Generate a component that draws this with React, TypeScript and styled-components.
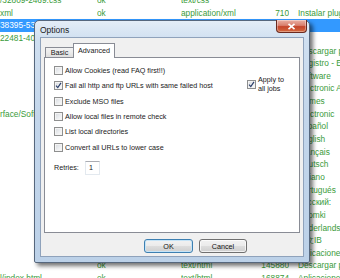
import React from "react";
import styled, { createGlobalStyle } from "styled-components";

const Global = createGlobalStyle`
  html, body { margin: 0; padding: 0; background: #ffffff; }
  body { width: 340px; height: 278px; overflow: hidden; }
`;

const Page = styled.div`
  position: relative;
  width: 340px;
  height: 278px;
  overflow: hidden;
  background: #ffffff;
  font-family: "Liberation Sans", Arial, sans-serif;
`;

const List = styled.div`
  display: flex;
  flex-direction: column;
  margin-top: -6px;
`;

const Row = styled.div<{ $selected?: boolean }>`
  display: grid;
  grid-template-columns: 97px 84px 80px 28px 9px 1fr;
  height: 12.65px;
  align-items: center;
  background: ${(p) => (p.$selected ? "#3399ff" : "transparent")};
  color: ${(p) => (p.$selected ? "#ffffff" : "#3a9b3a")};
  font-size: 8.3px;
  line-height: 12.65px;
  white-space: nowrap;
`;

const Cell = styled.span<{ $right?: boolean }>`
  overflow: hidden;
  text-align: ${(p) => (p.$right ? "right" : "left")};
`;

type RowData = {
  path?: string;
  status?: string;
  type?: string;
  size?: string;
  desc?: string;
  selected?: boolean;
};

const rows: RowData[] = [
  { path: "/32809-2469.css", status: "ok", type: "text/css" },
  { path: "xml", status: "ok", type: "application/xml", size: "710", desc: "Instalar plugins" },
  { path: "38395-535", selected: true },
  { path: "22481-408" },
  { desc: "Descargar plugins" },
  { desc: "Registro - Editar" },
  { desc: "Software" },
  { desc: "Electronic Ante" },
  { desc: "Games" },
  { path: "rface/Soft", desc: "Electronic" },
  { desc: "Español" },
  { desc: "English" },
  { desc: "Français" },
  { desc: "Deutsch" },
  { desc: "Italiano" },
  { desc: "Portugués" },
  { desc: "Pусский:" },
  { desc: "Suomki" },
  { desc: "Nederlands" },
  { desc: "中文IB" },
  { desc: "Aplicaciones" },
  { status: "ok", type: "text/html", size: "145880", desc: "Descargar plugins" },
  { path: "l/index.html", status: "ok", type: "text/html", size: "168874", desc: "Aplicaciones" },
];

const Dialog = styled.div`
  position: absolute;
  left: 34px;
  top: 20px;
  width: 276px;
  height: 243px;
  box-sizing: border-box;
  border: 1px solid #56677d;
  border-radius: 5px 5px 2px 2px;
  background: linear-gradient(180deg, #e4edf7 0%, #cfdff0 8%, #c3d6eb 40%, #bcd1e8 100%);
  box-shadow: 3px 3px 4px rgba(0, 0, 0, 0.55);
  display: flex;
  flex-direction: column;
  padding: 0 5px 5px 5px;
`;

const TitleBar = styled.div`
  height: 16px;
  display: flex;
  align-items: center;
  font-size: 8.5px;
  color: #1b1b1b;
`;

const Title = styled.span`
  padding-top: 1px;
`;

const CloseButton = styled.div`
  margin-left: auto;
  margin-right: -3px;
  align-self: flex-start;
  margin-top: -1px;
  width: 31px;
  height: 13px;
  box-sizing: border-box;
  border: 1px solid #6a2a20;
  border-top: none;
  border-radius: 0 0 4px 4px;
  background: linear-gradient(180deg, #eab1a5 0%, #d9806e 45%, #c6452b 55%, #d46a3f 100%);
  display: flex;
  align-items: center;
  justify-content: center;
  box-shadow: inset 0 0 0 1px rgba(255, 255, 255, 0.35);
`;

const Client = styled.div`
  flex: 1;
  background: #f0f0f0;
  border: 1px solid #8fa2bb;
  display: flex;
  flex-direction: column;
  font-size: 7.2px;
  color: #1a1a1a;
`;

const TabStrip = styled.div`
  display: flex;
  align-items: flex-end;
  height: 15px;
  margin: 5px 0 -1px 4px;
  position: relative;
  z-index: 1;
`;

const Tab = styled.div<{ $active?: boolean }>`
  box-sizing: border-box;
  height: ${(p) => (p.$active ? "15px" : "11px")};
  width: ${(p) => (p.$active ? "42px" : "28px")};
  border: 1px solid #898c95;
  border-bottom: ${(p) => (p.$active ? "none" : "1px solid #898c95")};
  border-right: ${(p) => (p.$active ? "1px solid #898c95" : "none")};
  background: ${(p) =>
    p.$active ? "#ffffff" : "linear-gradient(180deg, #f3f3f3 0%, #ebebeb 50%, #dedede 100%)"};
  display: flex;
  align-items: center;
  justify-content: center;
  padding-bottom: ${(p) => (p.$active ? "1px" : "0")};
`;

const Panel = styled.div`
  margin: 0 3px;
  height: 176px;
  box-sizing: border-box;
  border: 1px solid #898c95;
  background: #ffffff;
  display: flex;
  padding: 5px 0 0 9px;
`;

const OptionsColumn = styled.div`
  display: flex;
  flex-direction: column;
`;

const OptionRow = styled.label`
  display: flex;
  align-items: center;
  gap: 2px;
  height: 15.3px;
  white-space: nowrap;
`;

const Box = styled.span`
  width: 9px;
  height: 9px;
  box-sizing: border-box;
  border: 1px solid #8e8f8f;
  background: linear-gradient(135deg, #d6d9de 0%, #eef0f2 60%, #fbfbfb 100%);
  box-shadow: inset 0 0 0 1px #f4f4f4;
  display: flex;
  align-items: center;
  justify-content: center;
  flex-shrink: 0;
`;

const RetriesRow = styled.div`
  display: flex;
  align-items: center;
  margin-top: 6px;
  height: 14px;
`;

const RetriesLabel = styled.span`
  width: 31px;
`;

const NumberInput = styled.div`
  width: 15px;
  height: 14px;
  box-sizing: border-box;
  border: 1px solid #e3e9ef;
  border-top-color: #abadb3;
  background: #ffffff;
  padding-left: 3px;
  display: flex;
  align-items: center;
`;

const SideColumn = styled.div`
  margin-left: auto;
  width: 52px;
  padding-top: 13px;
`;

const SideOption = styled.label`
  display: flex;
  align-items: center;
  gap: 2px;
  line-height: 8.5px;
`;

const ButtonRow = styled.div`
  display: flex;
  justify-content: flex-end;
  gap: 6px;
  padding-right: 56px;
  margin-top: 6px;
`;

const Button = styled.div<{ $default?: boolean; $w: number }>`
  width: ${(p) => p.$w}px;
  height: 14px;
  box-sizing: border-box;
  border: 1px solid ${(p) => (p.$default ? "#3c7fb1" : "#707070")};
  border-radius: 3px;
  background: linear-gradient(180deg, #f2f2f2 0%, #ebebeb 48%, #dddddd 52%, #cfcfcf 100%);
  box-shadow: inset 0 0 0 1px ${(p) => (p.$default ? "#c6e4f7" : "rgba(255,255,255,0.7)")};
  display: flex;
  align-items: center;
  justify-content: center;
  color: #111;
`;

const Check = () => (
  <svg width="7" height="7" viewBox="0 0 7 7">
    <path d="M1 3.6 L2.8 5.6 L6 0.9" fill="none" stroke="#2b3f6b" strokeWidth="1.2" />
  </svg>
);

const Checkbox = ({ checked }: { checked?: boolean }) => <Box>{checked ? <Check /> : null}</Box>;

const options = [
  { label: "Allow Cookies (read FAQ first!!)" },
  { label: "Fail all http and ftp URLs with same failed host", checked: true },
  { label: "Exclude MSO files" },
  { label: "Allow local files in remote check" },
  { label: "List local directories" },
  { label: "Convert all URLs to lower case" },
];

export default function App() {
  return (
    <Page>
      <Global />
      <List>
        {rows.map((r, i) => (
          <Row key={i} $selected={r.selected}>
            <Cell>{r.path ?? ""}</Cell>
            <Cell>{r.status ?? ""}</Cell>
            <Cell>{r.type ?? ""}</Cell>
            <Cell $right>{r.size ?? ""}</Cell>
            <Cell />
            <Cell>{r.desc ?? ""}</Cell>
          </Row>
        ))}
      </List>
      <Dialog>
        <TitleBar>
          <Title>Options</Title>
          <CloseButton>
            <svg width="9" height="7" viewBox="0 0 9 7">
              <path d="M1.5 0.8 L7.5 6.2 M7.5 0.8 L1.5 6.2" stroke="#ffffff" strokeWidth="1.6" />
            </svg>
          </CloseButton>
        </TitleBar>
        <Client>
          <TabStrip>
            <Tab>Basic</Tab>
            <Tab $active>Advanced</Tab>
          </TabStrip>
          <Panel>
            <OptionsColumn>
              {options.map((o) => (
                <OptionRow key={o.label}>
                  <Checkbox checked={o.checked} />
                  <span>{o.label}</span>
                </OptionRow>
              ))}
              <RetriesRow>
                <RetriesLabel>Retries:</RetriesLabel>
                <NumberInput>1</NumberInput>
              </RetriesRow>
            </OptionsColumn>
            <SideColumn>
              <SideOption>
                <Checkbox checked />
                <span>
                  Apply to
                  <br />
                  all jobs
                </span>
              </SideOption>
            </SideColumn>
          </Panel>
          <ButtonRow>
            <Button $default $w={49}>OK</Button>
            <Button $w={48}>Cancel</Button>
          </ButtonRow>
        </Client>
      </Dialog>
    </Page>
  );
}
